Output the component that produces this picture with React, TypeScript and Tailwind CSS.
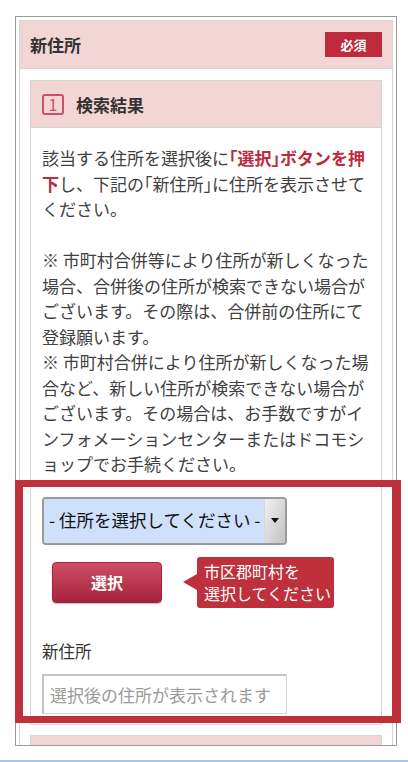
import React from "react";

const Halt = ({ children }: { children: React.ReactNode }) => (
  <span className="[font-feature-settings:'halt']">{children}</span>
);

export default function App() {
  return (
    <div className="relative w-[408px] h-[762px] overflow-hidden bg-white font-['Noto_Sans_CJK_JP',sans-serif] text-[#333]">
      <div className="pt-[16px] pl-[15px]">
        <div className="w-[382px] h-[730px] overflow-hidden border border-[#9a9a9a] px-[3px] pt-[3px]">
          <div className="border border-[#d6d6d6] bg-white">
            <div className="flex items-center justify-between h-[48px] bg-[#f2d6d5] border-b border-[#d3d3d3] px-[10px]">
              <span className="text-[17px] font-bold text-[#333] leading-none">新住所</span>
              <span className="w-[57px] h-[25px] bg-[#bf2a3d] text-white text-[13px] font-bold flex items-center justify-center leading-none">
                必須
              </span>
            </div>
            <div className="px-[10px] pt-[11px]">
              {/* card */}
              <div className="border border-[#d6d6d6] bg-white">
                <div className="flex items-center h-[47px] bg-[#f2d6d5] border-b border-[#d3d3d3] pl-[11px] gap-[12px]">
                  <span className="w-[22px] h-[21px] border-2 border-[#c9506b] rounded-[3px] text-[#c9506b] text-[16px] flex items-center justify-center leading-none">
                    1
                  </span>
                  <span className="text-[17px] font-bold text-[#333] leading-none">検索結果</span>
                </div>
                <div className="px-[11px] pt-[17px] pb-[10px]">
                  <p className="text-[17px] leading-[25.5px] text-[#404040] whitespace-nowrap">
                    該当する住所を選択後に
                    <span className="font-bold text-[#c0283c]">
                      <Halt>「</Halt>選択<Halt>」</Halt>ボタンを押
                      <br />下
                    </span>
                    し、下記の<Halt>「</Halt>新住所<Halt>」</Halt>に住所を表示させて
                    <br />
                    ください。
                    <br />
                    <br />※ 市町村合併等により住所が新しくなった
                    <br />場合、合併後の住所が検索できない場合が
                    <br />ございます。その際は、合併前の住所にて
                    <br />登録願います。
                    <br />※ 市町村合併により住所が新しくなった場
                    <br />合など、新しい住所が検索できない場合が
                    <br />ございます。その場合は、お手数ですがイ
                    <br />ンフォメーションセンターまたはドコモシ
                    <br />ョップでお手続ください。
                  </p>

                  {/* select */}
                  <div className="mt-[20px] w-[245px] h-[48px] flex border-2 border-[#9a9a9a] rounded-[4px] overflow-hidden">
                    <div className="flex-1 bg-[#cfe0fb] flex items-center pl-[5px] text-[17.5px] text-[#111] whitespace-nowrap">
                      - 住所を選択してください -
                    </div>
                    <div className="w-[21px] bg-linear-to-br from-[#f0f0f0] to-[#c2c2c2] flex items-center justify-center border-l border-[#d8d8d8]">
                      <div className="w-0 h-0 border-x-[4px] border-x-transparent border-t-[5px] border-t-[#111]" />
                    </div>
                  </div>

                  {/* button + tooltip */}
                  <div className="mt-[12px] flex items-center h-[51px]">
                    <div className="ml-[10px] w-[110px] h-[41px] rounded-[4px] bg-linear-to-b from-[#cd4d66] to-[#a6223a] border border-[#a52238] shadow-[0_1px_1px_rgba(0,0,0,0.25)] flex items-center justify-center text-white text-[16px] font-bold leading-none">
                      選択
                    </div>
                    <div className="ml-[21px] flex items-center">
                      <div className="w-0 h-0 border-y-[8px] border-y-transparent border-r-[14px] border-r-[#c0303c]" />
                      <div className="w-[137px] h-[51px] bg-[#c0303c] rounded-[3px] pl-[7px] pt-[3px] text-white text-[16px] leading-[22px] whitespace-nowrap">
                        市区郡町村を
                        <br />
                        選択してください
                      </div>
                    </div>
                  </div>

                  <div className="mt-[31px] text-[16.5px] leading-[25.5px] text-[#333]">新住所</div>
                  <div className="mt-[10px] w-[245px] h-[40px] border border-[#d5d5d5] border-t-2 border-l-2 border-t-[#c4c4c4] border-l-[#c4c4c4] flex items-center pl-[6px] text-[17px] text-[#9a9a9a] whitespace-nowrap">
                    選択後の住所が表示されます
                  </div>
                </div>
              </div>
              {/* next card (cut off) */}
              <div className="mt-[10px] border border-[#d6d6d6]">
                <div className="h-[47px] bg-[#f2d6d5] border-b border-[#d3d3d3]" />
              </div>
            </div>
          </div>
        </div>
      </div>
      <div className="mt-[14px] h-[2px] bg-[#a8c8e2]" />

      {/* highlight overlay */}
      <div className="absolute left-[15px] top-[480px] w-[386px] h-[243px] border-[#c0303c] border-l-[8px] border-t-[7px] border-b-[7px] border-r-[9px]" />
    </div>
  );
}
